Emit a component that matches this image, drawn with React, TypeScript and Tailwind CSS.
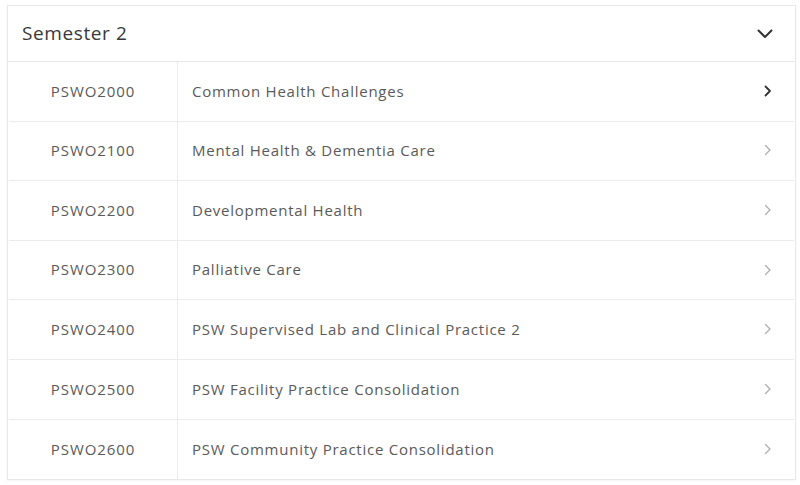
import React from 'react';

const courses = [
  { code: 'PSWO2000', name: 'Common Health Challenges', active: true },
  { code: 'PSWO2100', name: 'Mental Health & Dementia Care' },
  { code: 'PSWO2200', name: 'Developmental Health' },
  { code: 'PSWO2300', name: 'Palliative Care' },
  { code: 'PSWO2400', name: 'PSW Supervised Lab and Clinical Practice 2' },
  { code: 'PSWO2500', name: 'PSW Facility Practice Consolidation' },
  { code: 'PSWO2600', name: 'PSW Community Practice Consolidation' },
];

function ChevronRight({ dark }: { dark?: boolean }) {
  return (
    <svg width="8" height="12" viewBox="0 0 8 12" fill="none">
      <path
        d="M1.5 1.5 6 6l-4.5 4.5"
        stroke={dark ? '#333333' : '#b0b0b0'}
        strokeWidth={dark ? 1.8 : 1.4}
        strokeLinecap="round"
        strokeLinejoin="round"
      />
    </svg>
  );
}

export default function App() {
  return (
    <div className="w-[800px] h-[485px] bg-white pt-[5px] px-[7px] font-['Open_Sans',sans-serif]">
      <div className="w-[789px] border border-[#e8e8e8] shadow-[0_1px_2px_rgba(0,0,0,0.04)]">
        <div className="h-[56px] flex items-center justify-between pl-[14px] pr-[22px] border-b border-[#e8e8e8]">
          <span className="text-[19px] tracking-[0.6px] text-[#383838]">Semester 2</span>
          <svg width="16" height="10" viewBox="0 0 16 10" fill="none">
            <path d="M1.5 1.5 8 8l6.5-6.5" stroke="#333" strokeWidth="2" strokeLinecap="round" strokeLinejoin="round" />
          </svg>
        </div>
        <div className="px-[1px]">
          {courses.map((c, i) => (
            <div
              key={c.code}
              className={`flex h-[59.6px] ${i < courses.length - 1 ? 'border-b border-[#ececec]' : ''}`}
            >
              <div className="w-[169px] flex items-center justify-center border-r border-[#ececec] pb-[1px] text-[15px] tracking-[0.9px] text-[#5a5a5a]">
                {c.code}
              </div>
              <div className="flex-1 flex items-center justify-between pl-[14px] pr-[22px] pb-[1px] text-[15px] text-[#5a5a5a]">
                <span className="tracking-[0.75px]">{c.name}</span>
                <ChevronRight dark={c.active} />
              </div>
            </div>
          ))}
        </div>
      </div>
    </div>
  );
}
